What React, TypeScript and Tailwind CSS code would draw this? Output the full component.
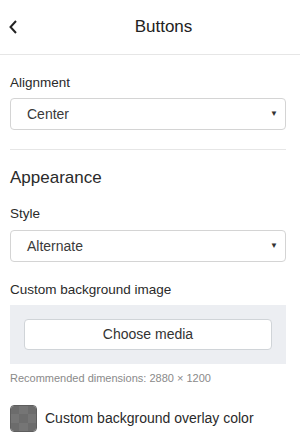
import React from 'react';

const Select: React.FC<{ value: string }> = ({ value }) => (
  <div className="relative h-8 w-full rounded border border-[#d4d4d4] bg-white">
    <span className="absolute left-4 top-1/2 -translate-y-1/2 text-[14px] text-[#3a3a3a]">{value}</span>
    <span className="absolute right-[7px] top-1/2 -translate-y-1/2 text-[8px] text-[#333]">▼</span>
  </div>
);

const App: React.FC = () => {
  return (
    <div className="h-[448px] w-[300px] overflow-hidden bg-white font-['Liberation_Sans',Arial,sans-serif] text-[#2a2a2a]">
      <div className="relative flex h-[55px] items-center justify-center border-b border-[#e6e6e6] pl-[27px]">
        <svg className="absolute left-[8px] top-[19px]" width="10" height="16" viewBox="0 0 10 16">
          <path d="M8 2 L2.5 8 L8 14" fill="none" stroke="#222" strokeWidth="2" />
        </svg>
        <span className="text-[17px] text-[#222]">Buttons</span>
      </div>

      <div className="pl-[10px] pr-[14px]">
        <div className="pt-[20px] text-[13.5px] leading-[16px]">Alignment</div>
        <div className="mt-[7px]">
          <Select value="Center" />
        </div>
        <div className="mt-[19px] border-t border-[#e6e6e6]" />

        <div className="pt-[18px] text-[17px] leading-[20px]">Appearance</div>
        <div className="pt-[18px] text-[13.5px] leading-[16px]">Style</div>
        <div className="mt-[8px]">
          <Select value="Alternate" />
        </div>

        <div className="pt-[20px] text-[13.5px] leading-[16px]">Custom background image</div>
        <div className="mt-[7px] bg-[#eceef2] px-[14px] py-[14px]">
          <div className="flex h-[31px] items-center justify-center rounded border border-[#d0d4d8] bg-white text-[14px] text-[#333]">
            Choose media
          </div>
        </div>
        <div className="mt-[7px] text-[11px] leading-[14px] text-[#8a8a8a]">Recommended dimensions: 2880 × 1200</div>

        <div className="mt-[20px] flex items-center gap-[8px]">
          <div className="grid h-[27px] w-[27px] grid-cols-3 grid-rows-3 overflow-hidden rounded-[4px] border border-[#5e5e5e]">
            <div className="bg-[#6c6c6c]" />
            <div className="bg-[#757575]" />
            <div className="bg-[#6c6c6c]" />
            <div className="bg-[#757575]" />
            <div className="bg-[#6c6c6c]" />
            <div className="bg-[#757575]" />
            <div className="bg-[#6c6c6c]" />
            <div className="bg-[#757575]" />
            <div className="bg-[#6c6c6c]" />
          </div>
          <span className="text-[14px] text-[#2a2a2a]">Custom background overlay color</span>
        </div>
      </div>
    </div>
  );
};

export default App;
